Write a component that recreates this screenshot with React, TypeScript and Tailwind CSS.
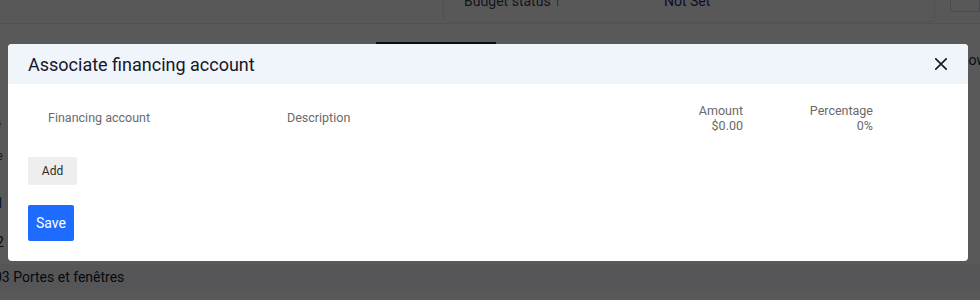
import React from "react";

function CloseIcon() {
  return (
    <svg width="12" height="12" viewBox="0 0 12 12" fill="none">
      <path d="M0.8 0.8L11.2 11.2M11.2 0.8L0.8 11.2" stroke="#1b1b2b" strokeWidth="1.7" strokeLinecap="round" />
    </svg>
  );
}

export default function App() {
  return (
    <div className="relative h-[300px] w-[980px] overflow-hidden bg-white font-['Roboto','Liberation_Sans',sans-serif]">
      {/* underlying page */}
      <div className="flex h-[24px] border-b border-gray-200 bg-[#fcfcfc]">
        <div className="w-[443px]" />
        <div className="-mt-[20px] flex h-[42px] w-[492px] items-start rounded-b border border-gray-200 pl-[20px] pt-[10px] text-[14px]">
          <span className="w-[200px] text-gray-700">Budget status ↑</span>
          <span className="text-[#1e2a8a]">Not Set</span>
        </div>
        <div className="ml-[15px] -mt-[20px] h-[32px] flex-1 rounded-bl border border-gray-300" />
      </div>
      <div className="flex h-[20px] items-end">
        <div className="ml-[376px] h-[2px] w-[120px] bg-gray-800" />
        <div className="ml-auto mb-[-27px] mr-[-7px] text-[14px] text-gray-800">Show</div>
      </div>
      <div className="pt-[67px] text-[14px] text-gray-900">
        <div className="-ml-[8px] text-[17px]">e</div>
        <div className="-ml-[10px] mt-[10px] text-[12px] text-gray-600">ue</div>
        <div className="-ml-[4px] mt-[28px] text-[#0d3b8a]">1</div>
        <div className="-ml-[4px] mt-[18px]">2</div>
        <div className="-ml-[6px] mt-[11px] bg-[#f5f6fb] py-[3px]">03 Portes et fenêtres</div>
      </div>

      {/* overlay */}
      <div className="absolute inset-0 bg-black/[0.65]">
        <div className="ml-[8px] mt-[44px] w-[960px] overflow-hidden rounded-[4px] bg-white">
          <div className="flex h-[40px] items-center justify-between bg-[#f0f4fb] pl-[20px] pr-[21px]">
            <span className="text-[18px] text-[#16162a]">Associate financing account</span>
            <CloseIcon />
          </div>
          <div className="px-[20px] pb-[20px] pt-[17px]">
            <div className="flex h-[34px] items-center text-[12.5px] leading-[15px] text-[#6a6a6a]">
              <div className="-mt-[2px] w-[239px] pl-[20px]">Financing account</div>
              <div className="-mt-[2px] w-[376px] pl-[20px]">Description</div>
              <div className="w-[120px] pr-[20px] text-right">
                <div>Amount</div>
                <div>$0.00</div>
              </div>
              <div className="w-[130px] pr-[20px] text-right">
                <div>Percentage</div>
                <div>0%</div>
              </div>
              <div className="flex-1" />
            </div>
            <button className="mt-[22px] flex h-[28px] w-[49px] items-center justify-center rounded-[2px] bg-[#eeeeee] text-[12px] text-[#2b2b2b]">
              Add
            </button>
            <button className="mt-[20px] flex h-[36px] w-[46px] items-center justify-center rounded-[2px] bg-[#1d6bff] text-[14px] text-white">
              Save
            </button>
          </div>
        </div>
      </div>
    </div>
  );
}
